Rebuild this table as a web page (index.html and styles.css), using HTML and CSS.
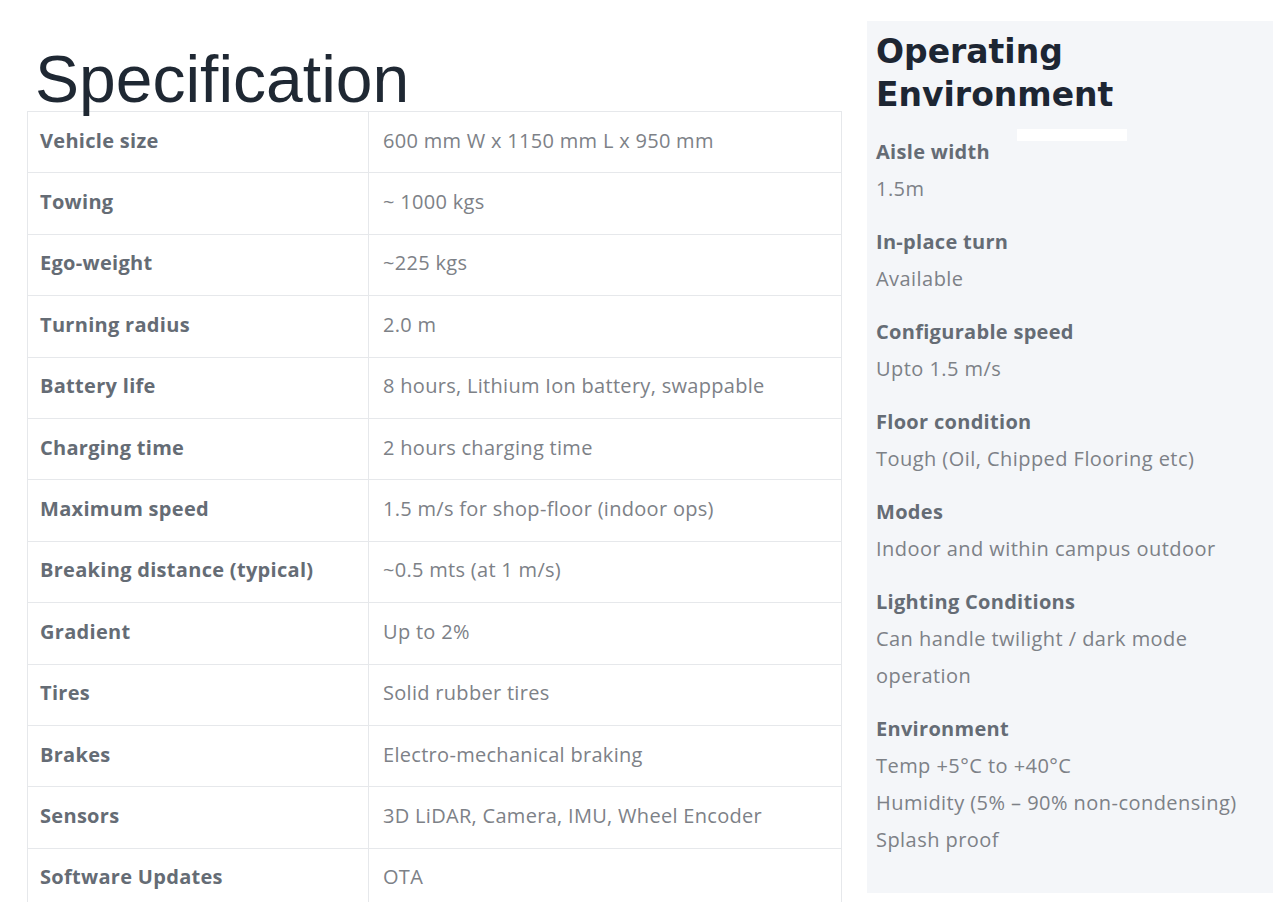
FILE: index.html
```html
<!DOCTYPE html>
<html lang="en">
<head>
<meta charset="utf-8">
<title>Specification</title>
<link rel="stylesheet" href="styles.css">
</head>
<body>
<div class="page">
  <section class="spec">
    <h1 class="spec-title">Specification</h1>
    <table class="spec-table">
      <tbody>
        <tr><th>Vehicle size</th><td>600 mm W x 1150 mm L x 950 mm</td></tr>
        <tr><th>Towing</th><td>~ 1000 kgs</td></tr>
        <tr><th>Ego-weight</th><td>~225 kgs</td></tr>
        <tr><th>Turning radius</th><td>2.0 m</td></tr>
        <tr><th>Battery life</th><td>8 hours, Lithium Ion battery, swappable</td></tr>
        <tr><th>Charging time</th><td>2 hours charging time</td></tr>
        <tr><th>Maximum speed</th><td>1.5 m/s for shop-floor (indoor ops)</td></tr>
        <tr><th>Breaking distance (typical)</th><td>~0.5 mts (at 1 m/s)</td></tr>
        <tr><th>Gradient</th><td>Up to 2%</td></tr>
        <tr><th>Tires</th><td>Solid rubber tires</td></tr>
        <tr><th>Brakes</th><td>Electro-mechanical braking</td></tr>
        <tr><th>Sensors</th><td>3D LiDAR, Camera, IMU, Wheel Encoder</td></tr>
        <tr><th>Software Updates</th><td>OTA</td></tr>
      </tbody>
    </table>
  </section>
  <aside class="env">
    <span class="env-mark"></span>
    <h2 class="env-title">Operating<br>Environment</h2>
    <dl class="env-list">
      <div class="env-item"><dt>Aisle width</dt><dd>1.5m</dd></div>
      <div class="env-item"><dt>In-place turn</dt><dd>Available</dd></div>
      <div class="env-item"><dt>Configurable speed</dt><dd>Upto 1.5 m/s</dd></div>
      <div class="env-item"><dt>Floor condition</dt><dd>Tough (Oil, Chipped Flooring etc)</dd></div>
      <div class="env-item"><dt>Modes</dt><dd>Indoor and within campus outdoor</dd></div>
      <div class="env-item"><dt>Lighting Conditions</dt><dd>Can handle twilight / dark mode operation</dd></div>
      <div class="env-item"><dt>Environment</dt><dd>Temp +5°C to +40°C<br>Humidity (5% – 90% non-condensing)<br>Splash proof</dd></div>
    </dl>
  </aside>
</div>
</body>
</html>
```
FILE: styles.css
```css
* { box-sizing: border-box; }
html, body { margin: 0; padding: 0; background: #ffffff; }
body { width: 1276px; height: 902px; overflow: hidden; }

.page {
  display: flex;
  align-items: flex-start;
  padding: 0 3px 0 27px;
  gap: 25px;
}

.spec { width: 815px; flex: none; }

.spec-title {
  margin: 0;
  padding: 47px 0 0 8px;
  font-family: "Liberation Sans", Arial, sans-serif;
  font-weight: 400;
  font-size: 66px;
  line-height: 64px;
  color: #1f2833;
  position: relative;
  z-index: 1;
}

.spec-table {
  width: 815px;
  border-collapse: collapse;
  font-family: "Open Sans", sans-serif;
  font-size: 20px;
  letter-spacing: 0.3px;
}
.spec-table th,
.spec-table td {
  border: 1px solid #e6e8eb;
  height: 61.4px;
  padding: 0 12px 4px;
  text-align: left;
  vertical-align: middle;
}
.spec-table th {
  width: 341px;
  font-weight: 700;
  color: #656c75;
}
.spec-table td {
  padding-left: 14px;
  font-weight: 400;
  color: #7d8187;
}

.env {
  position: relative;
  flex: none;
  width: 406px;
  height: 872px;
  margin-top: 21px;
  background: #f4f6f9;
  padding: 8px 9px 0;
}
.env-mark {
  position: absolute;
  left: 150px;
  top: 108px;
  width: 110px;
  height: 12px;
  background: #ffffff;
}
.env-title {
  margin: 0 0 18px;
  padding-top: 1px;
  font-family: "DejaVu Sans", sans-serif;
  font-weight: 600;
  font-size: 33px;
  line-height: 43px;
  color: #1d2633;
}
.env-list { margin: 0; font-family: "Open Sans", sans-serif; font-size: 20px; }
.env-item { margin-bottom: 17px; }
.env-item dt {
  font-weight: 700;
  color: #656c75;
  line-height: 36px;
  letter-spacing: 0.3px;
}
.env-item dd {
  margin: 0;
  color: #7d8187;
  line-height: 37px;
  letter-spacing: 0.45px;
}
```
